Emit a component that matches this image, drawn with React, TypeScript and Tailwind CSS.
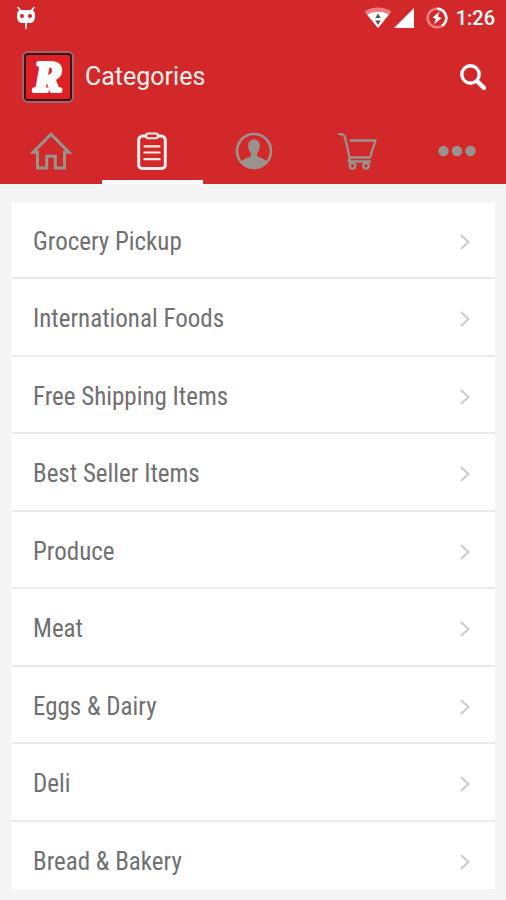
import { useState } from 'react';
import type { ReactNode } from 'react';

const CATEGORIES = [
  'Grocery Pickup',
  'International Foods',
  'Free Shipping Items',
  'Best Seller Items',
  'Produce',
  'Meat',
  'Eggs & Dairy',
  'Deli',
  'Bread & Bakery',
];

function HomeIcon() {
  return (
    <svg width="42" height="38" viewBox="0 0 42 38" fill="none" stroke="currentColor" strokeWidth="3" strokeLinejoin="miter">
      <path d="M21 2.2 3.2 20.2H7.5V36H16.7V24.3H25.3V36H34.5V20.2H38.8Z" />
    </svg>
  );
}

function ListIcon() {
  return (
    <svg width="30" height="38" viewBox="0 0 30 38" fill="none" stroke="currentColor" strokeWidth="3" strokeLinecap="round">
      <path d="M9 4H5.5A4 4 0 0 0 1.7 8V33A3.5 3.5 0 0 0 5.2 36.5H24.8A3.5 3.5 0 0 0 28.3 33V8A4 4 0 0 0 24.5 4H21" />
      <rect x="9" y="1.6" width="12" height="4.6" rx="2" strokeWidth="2" />
      <path d="M7.5 14.3H22.5M7.5 20.5H22.5M7.5 27.2H22.5" strokeWidth="2.2" />
    </svg>
  );
}

function AccountIcon() {
  return (
    <svg width="38" height="38" viewBox="0 0 38 38" fill="currentColor">
      <circle cx="19" cy="19" r="17" fill="none" stroke="currentColor" strokeWidth="2.6" />
      <path d="M19 7.5C15.2 7.5 13.1 10 13.2 13.8C13.2 17 14.3 19.5 15.8 21V24.3C13.5 26 8.5 26.3 6 30A16.7 16.7 0 0 0 32 30C29.5 26.3 24.5 26 22.2 24.3V21C23.7 19.5 24.8 17 24.8 13.8C24.9 10 22.8 7.5 19 7.5Z" />
    </svg>
  );
}

function CartIcon() {
  return (
    <svg width="44" height="38" viewBox="-3 0 44 38" fill="none" stroke="currentColor" strokeWidth="2.3" strokeLinecap="round" strokeLinejoin="round">
      <path d="M2 2.2H5.5L7.8 4.5 12.8 26.5 11.5 29.5H33" />
      <path d="M13.5 8.5H38.5L33 25.5H12.8" />
      <circle cx="15.5" cy="33.8" r="2.8" />
      <circle cx="29" cy="33.8" r="2.8" />
    </svg>
  );
}

function MoreIcon() {
  return (
    <svg width="38" height="12" viewBox="0 0 38 12" fill="currentColor">
      <circle cx="5.5" cy="6" r="5.2" />
      <circle cx="19" cy="6" r="5.2" />
      <circle cx="32.5" cy="6" r="5.2" />
    </svg>
  );
}

const TABS: { name: string; icon: ReactNode }[] = [
  { name: 'Home', icon: <HomeIcon /> },
  { name: 'Categories', icon: <ListIcon /> },
  { name: 'Account', icon: <AccountIcon /> },
  { name: 'Cart', icon: <CartIcon /> },
  { name: 'More', icon: <MoreIcon /> },
];

function StatusBar() {
  return (
    <div className="flex h-9 items-center justify-between pr-[11px] pl-4 text-white">
      <svg width="20" height="24" viewBox="0 0 20 24">
        <path d="M2 1.5 5 5M18 1.5 15 5M10 16V22.5" stroke="#fff" strokeWidth="1.6" strokeLinecap="round" />
        <path d="M4.5 4H15.5C18 4 19 6.5 19 10C19 14.5 17 17 14 17H6C3 17 1 14.5 1 10C1 6.5 2 4 4.5 4Z" fill="#fff" />
        <circle cx="6" cy="10" r="2" fill="#d32829" />
        <circle cx="14" cy="10" r="2" fill="#d32829" />
      </svg>
      <div className="flex items-center">
        <svg width="28" height="22" viewBox="0 0 28 22">
          <path d="M14 21 .5 4.5C8 -1 20 -1 27.5 4.5Z" fill="#e97f80" />
          <path d="M14 21 3.2 7.7C9 3.8 19 3.8 24.8 7.7Z" fill="#fff" />
          <path d="M14 6.5 16.8 11H11.2ZM14 18 16.8 13.5H11.2Z" fill="#555" />
        </svg>
        <svg className="ml-0.5" width="20" height="20" viewBox="0 0 20 20">
          <path d="M20 0V20H0Z" fill="#fff" />
        </svg>
        <svg className="ml-3" width="22" height="22" viewBox="0 0 22 22" fill="none">
          <circle cx="11" cy="11" r="9.3" stroke="#e97f80" strokeWidth="2.6" />
          <path d="M11 1.7A9.3 9.3 0 0 1 16 18.8" stroke="#fff" strokeWidth="2.6" />
          <path d="M13.5 4.5 6.5 10.5 9.8 12 8 17.5 15.5 11 12 9.6Z" fill="#fff" />
        </svg>
        <span className="ml-2 text-xl leading-6 font-medium">1:26</span>
      </div>
    </div>
  );
}

function Logo() {
  return (
    <svg width="52" height="52" viewBox="0 0 52 52">
      <rect x="1" y="1" width="50" height="50" rx="5" fill="none" stroke="#a8666a" strokeWidth="2" />
      <rect x="3" y="3" width="46" height="46" rx="3" fill="#de1f26" stroke="#3a1216" strokeWidth="2" />
      <text
        x="26"
        y="40"
        textAnchor="middle"
        fill="#fff"
        stroke="#fff"
        strokeWidth="4"
        strokeLinejoin="round"
        className="font-['Liberation_Serif',serif] text-[42px] font-bold italic"
      >
        R
      </text>
    </svg>
  );
}

export default function App() {
  const [active, setActive] = useState('Categories');

  return (
    <div className="flex min-h-screen flex-col bg-[#f4f4f4] font-['Roboto',sans-serif]">
      <header className="overflow-hidden bg-[#d32829]">
        <StatusBar />
        <div className="flex h-[82px] items-center pr-5 pl-[22px]">
          <Logo />
          <h1 className="ml-[11px] flex-1 text-[25px] leading-8 text-[#fff1ee]">{active}</h1>
          <button type="button" aria-label="Search" className="text-white">
            <svg width="26" height="26" viewBox="0 0 26 26" fill="none" stroke="currentColor">
              <circle cx="10.5" cy="10.5" r="8.7" strokeWidth="3.4" />
              <path d="M17 17 24 24" strokeWidth="4.4" strokeLinecap="round" />
            </svg>
          </button>
        </div>
        <nav className="-mr-0.5 grid grid-cols-5">
          {TABS.map((tab) => (
            <button
              key={tab.name}
              type="button"
              aria-label={tab.name}
              onClick={() => setActive(tab.name)}
              className={`flex h-[66px] items-center justify-center border-b-4 pt-1 ${
                tab.name === active ? 'border-white text-[#ffeeec]' : 'border-transparent text-[#999390]'
              }`}
            >
              {tab.icon}
            </button>
          ))}
        </nav>
      </header>

      <main className="flex flex-1 flex-col px-[11px] pt-[18px] pb-[11px]">
        <ul className="grid flex-1 grid-rows-[repeat(8,9fr)_8fr] gap-0.5 bg-[#ebebeb]">
          {CATEGORIES.map((name) => (
            <li key={name} className="bg-white">
              <a href="#" className="flex items-center justify-between pt-6 pr-6 pl-[22px]">
                <span className="font-['Roboto_Condensed','Roboto',sans-serif] text-[25px] leading-8 text-[#707070]">
                  {name}
                </span>
                <svg width="12" height="18" viewBox="0 0 12 18" fill="none" stroke="#ccc" strokeWidth="2">
                  <path d="M2 2 9.5 9 2 16" />
                </svg>
              </a>
            </li>
          ))}
        </ul>
      </main>
    </div>
  );
}
